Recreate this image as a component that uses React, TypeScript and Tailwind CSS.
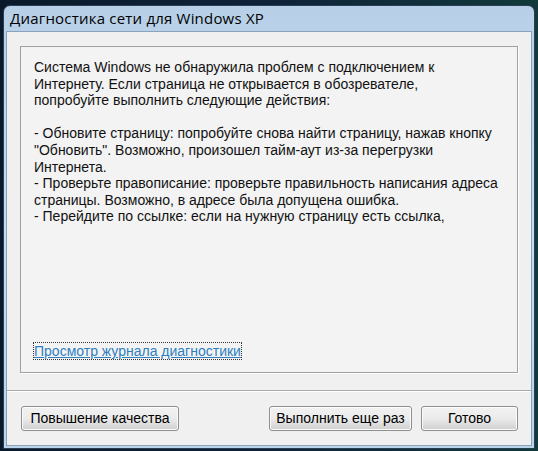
const lines = [
  "Система Windows не обнаружила проблем с подключением к",
  "Интернету. Если страница не открывается в обозревателе,",
  "попробуйте выполнить следующие действия:",
  "",
  "- Обновите страницу: попробуйте снова найти страницу, нажав кнопку",
  "\"Обновить\". Возможно, произошел тайм-аут из-за перегрузки",
  "Интернета.",
  "- Проверьте правописание: проверьте правильность написания адреса",
  "страницы. Возможно, в адресе была допущена ошибка.",
  "- Перейдите по ссылке: если на нужную страницу есть ссылка,",
];

function Button({ label, className }: { label: string; className?: string }) {
  return (
    <button
      className={
        "h-[25px] rounded-[3px] border border-[#8e8f8f] bg-gradient-to-b from-[#f2f2f2] via-[#ebebeb] to-[#cfcfcf] text-[14px] text-black shadow-[inset_0_0_0_1px_#fcfcfc] " +
        (className ?? "")
      }
    >
      {label}
    </button>
  );
}

export default function App() {
  return (
    <div className="w-[538px] h-[451px] overflow-hidden bg-gradient-to-r from-[#0a1a2c] via-[#0f2238] to-[#123a3a] pt-[5px] pl-[3px] pr-[3px] pb-[2px] font-['Liberation_Sans',Arial,sans-serif]">
      <div className="flex h-full flex-col rounded-t-[7px] border border-[#2a3f55] bg-gradient-to-b from-[#b7d0e8] via-[#c6dcef] to-[#bcd4ea] px-[2px] pb-[2px]">
        {/* title bar */}
        <div className="flex h-[25px] items-center pl-[4px] font-['Open_Sans',sans-serif] text-[15px] tracking-[0.2px] text-black">
          Диагностика сети для Windows XP
        </div>

        {/* client area */}
        <div className="flex flex-1 flex-col border border-[#8aa3bb] bg-[#f0f0f0]">
          <div className="mx-[13px] mt-[14px] flex h-[327px] flex-col justify-between border border-[#a0a0a0] bg-[#f3f3f3] pl-[13px] pt-[12px] pb-[9px] shadow-[1px_1px_0_#ffffff]">
            <div className="text-[14px] leading-[16.6px] text-[#111]">
              {lines.map((l, i) => (
                <div key={i} className="h-[16.6px] whitespace-pre">
                  {l}
                </div>
              ))}
            </div>
            <div>
              <span className="outline-1 outline-dotted outline-[#333] text-[14px] text-[#2f7fbf] underline">
                Просмотр журнала диагностики
              </span>
            </div>
          </div>

          <div className="mt-[17px] border-t border-[#a9a9a9] shadow-[0_1px_0_#ffffff]" />

          <div className="mx-[14px] mt-[15px] flex items-center">
            <Button label="Повышение качества" className="w-[158px]" />
            <div className="flex-1" />
            <Button label="Выполнить еще раз" className="w-[143px]" />
            <Button label="Готово" className="ml-[9px] w-[97px] mr-[-1px]" />
          </div>
        </div>
      </div>
    </div>
  );
}
